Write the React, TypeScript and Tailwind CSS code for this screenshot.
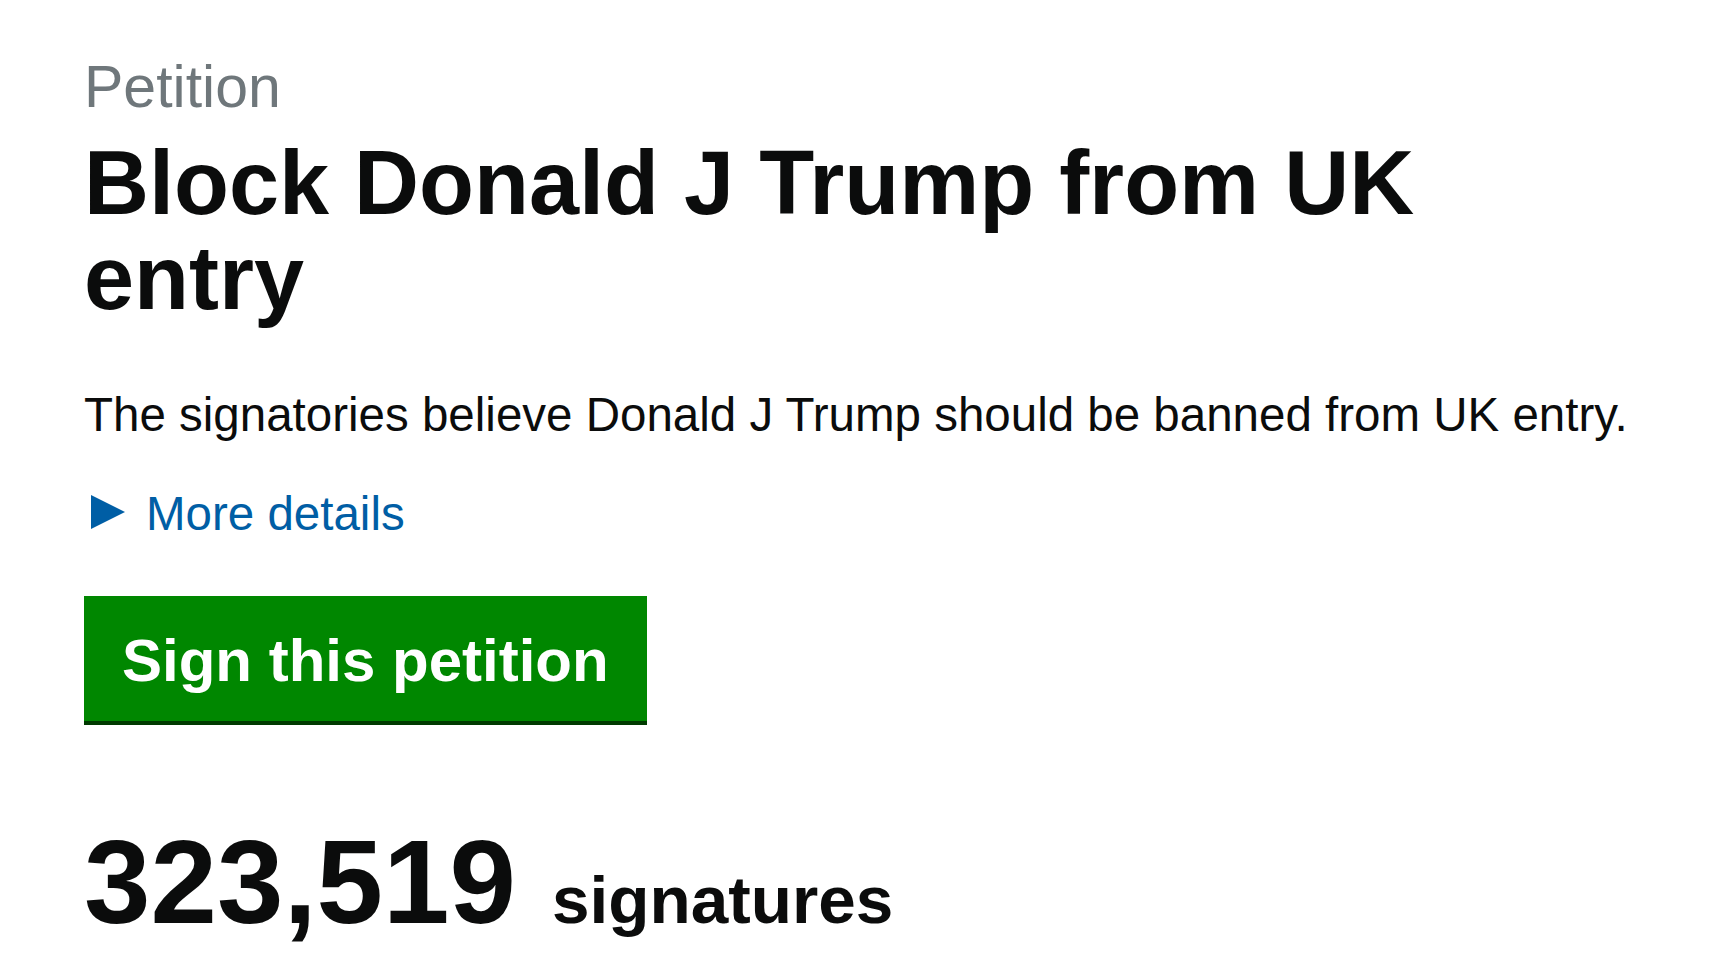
export default function App() {
  return (
    <div className="min-h-screen bg-white text-[#0b0c0c]" style={{ fontFamily: '"Liberation Sans", Arial, sans-serif' }}>
      <main className="pl-[84px] pr-[40px] pt-[50px]">
        {/* Title */}
        <span className="block text-[59px] leading-[74px] text-[#6f777b]">Petition</span>
        <h1 className="mt-[12px] max-w-[1450px] text-[90px] leading-[95px] font-bold">
          Block Donald J Trump from UK entry
        </h1>

        <p className="mt-[58px] text-[47.5px] leading-[62px]">
          The signatories believe Donald J Trump should be banned from UK entry.
        </p>

        {/* Details toggle */}
        <div className="mt-[37px] flex items-start">
          <svg className="ml-[7px] mt-[12px] shrink-0" width="34" height="34" viewBox="0 0 34 34">
            <polygon points="0,0 34,17 0,34" fill="#005ea5" />
          </svg>
          <a href="#" className="ml-[21px] text-[47.5px] leading-[62px] text-[#005ea5]">
            More details
          </a>
        </div>

        <button className="mt-[51px] block bg-[#008700] px-[38px] pt-[35px] pb-[31px] text-[60px] leading-[59px] font-bold text-white shadow-[0_4px_0_#003a00]">
          Sign this petition
        </button>

        {/* Count */}
        <p className="mt-[102px] text-[119.5px] leading-[118px] font-bold">
          323,519
          <span className="ml-[36px] text-[67.5px]">signatures</span>
        </p>
      </main>
    </div>
  );
}
